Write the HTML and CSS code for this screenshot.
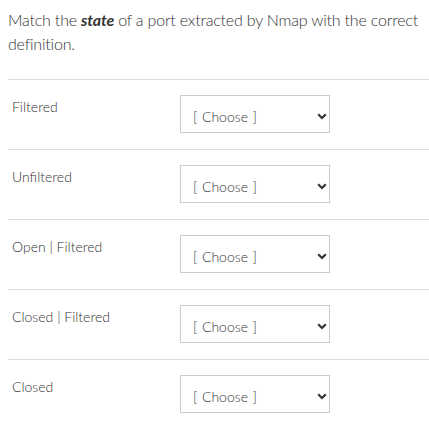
FILE: index.html
```html
<!DOCTYPE html>
<html>
<head>
    <title>Port states</title>
    <link rel="stylesheet" href="styles.css">
</head>
<body>

<div class="question">
    <p class="prompt">Match the <em class="term">state</em> of a port extracted by Nmap with the correct definition.</p>

    <div class="answers">
        <div class="answer-row">
            <div class="answer-label">Filtered</div>
            <div class="answer-choice">
                <select class="choice"><option>[ Choose ]</option></select>
                <svg class="chevron" width="10" height="7" viewBox="0 0 10 7"><path d="M1.2 1.3 L5 5 L8.8 1.3" fill="none" stroke="#333" stroke-width="2.2"/></svg>
            </div>
        </div>
        <div class="answer-row">
            <div class="answer-label">Unfiltered</div>
            <div class="answer-choice">
                <select class="choice"><option>[ Choose ]</option></select>
                <svg class="chevron" width="10" height="7" viewBox="0 0 10 7"><path d="M1.2 1.3 L5 5 L8.8 1.3" fill="none" stroke="#333" stroke-width="2.2"/></svg>
            </div>
        </div>
        <div class="answer-row">
            <div class="answer-label">Open | Filtered</div>
            <div class="answer-choice">
                <select class="choice"><option>[ Choose ]</option></select>
                <svg class="chevron" width="10" height="7" viewBox="0 0 10 7"><path d="M1.2 1.3 L5 5 L8.8 1.3" fill="none" stroke="#333" stroke-width="2.2"/></svg>
            </div>
        </div>
        <div class="answer-row">
            <div class="answer-label">Closed | Filtered</div>
            <div class="answer-choice">
                <select class="choice"><option>[ Choose ]</option></select>
                <svg class="chevron" width="10" height="7" viewBox="0 0 10 7"><path d="M1.2 1.3 L5 5 L8.8 1.3" fill="none" stroke="#333" stroke-width="2.2"/></svg>
            </div>
        </div>
        <div class="answer-row">
            <div class="answer-label">Closed</div>
            <div class="answer-choice">
                <select class="choice"><option>[ Choose ]</option></select>
                <svg class="chevron" width="10" height="7" viewBox="0 0 10 7"><path d="M1.2 1.3 L5 5 L8.8 1.3" fill="none" stroke="#333" stroke-width="2.2"/></svg>
            </div>
        </div>
    </div>
</div>

</body>
</html>
```

FILE: styles.css
```css
body {
    margin: 0;
    padding: 8px 0 0 8px;
    background: #fff;
    color: #333;
    font-family: Lato, "Open Sans", sans-serif;
    font-weight: 300;
}

.prompt {
    margin: 0 0 23px 0;
    padding-right: 6px;
    font-size: 16px;
    line-height: 24px;
    letter-spacing: -0.2px;
}

.term {
    font-style: italic;
    font-weight: 700;
}

.answer-row {
    display: grid;
    grid-template-columns: 168px 150px;
    height: 69px;
    padding-left: 4px;
    border-top: 1px solid #dedede;
}

.answer-label {
    padding-top: 17px;
    font-size: 14px;
    line-height: 20px;
}

.answer-choice {
    position: relative;
    align-self: start;
    margin-top: 15px;
    height: 36px;
    border: 1px solid #cbcbcb;
    background: #fff;
}

.choice {
    appearance: none;
    -webkit-appearance: none;
    display: block;
    width: 100%;
    height: 36px;
    margin: 0;
    padding: 4px 0 0 12px;
    border: none;
    border-radius: 0;
    outline: none;
    background: transparent;
    color: #333;
    font-family: Lato, "Open Sans", sans-serif;
    font-weight: 300;
    font-size: 14px;
    word-spacing: 1px;
}

.chevron {
    position: absolute;
    left: 136px;
    top: 17px;
    pointer-events: none;
}
```
